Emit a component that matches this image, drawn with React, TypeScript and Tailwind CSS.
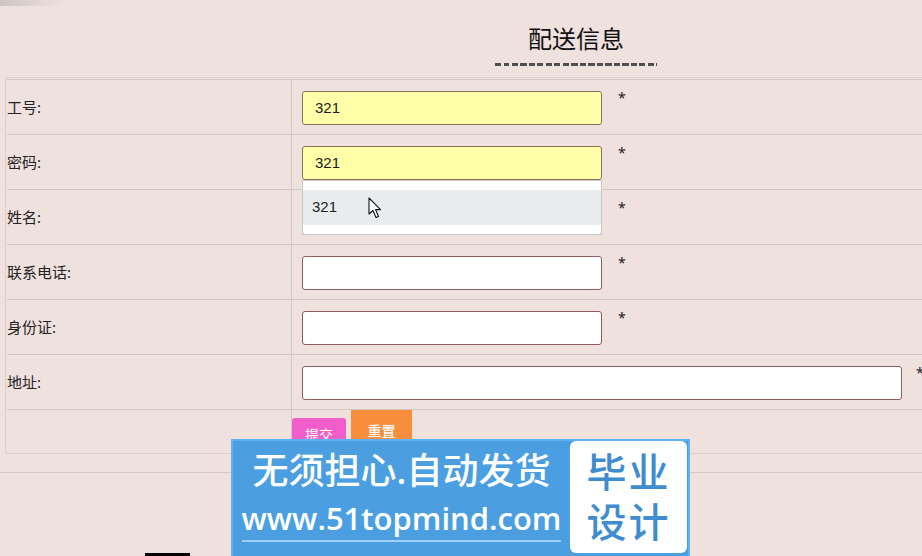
const rows = [
  { label: "工号:", value: "321", filled: true, wide: false },
  { label: "密码:", value: "321", filled: true, wide: false, suggest: true },
  { label: "姓名:", value: "", filled: false, wide: false },
  { label: "联系电话:", value: "", filled: false, wide: false },
  { label: "身份证:", value: "", filled: false, wide: false },
  { label: "地址:", value: "", filled: false, wide: true },
];

const cjk = "font-['Noto_Sans','Noto_Sans_CJK_SC',sans-serif]";

function Cursor() {
  return (
    <svg width="14" height="22" viewBox="0 0 14 22" className="absolute left-[65px] top-[7px]">
      <path d="M1 1 L1 17 L5 13.5 L8 20.5 L10.5 19.5 L7.6 12.6 L12.5 12.6 Z" fill="#fff" stroke="#111" strokeWidth="1.1" strokeLinejoin="round" />
    </svg>
  );
}

export default function App() {
  return (
    <div className={`relative w-[922px] h-[556px] overflow-hidden bg-[#efe1dd] text-[#1c1c1c] ${cjk}`}>
      <div className="w-[1152px]">
        <div className="h-[6px] w-[64px] bg-gradient-to-r from-[#cdc4c2] to-transparent" />

        {/* title */}
        <div className="h-[71px] flex flex-col items-center">
          <h2 className="mt-[17px] text-[24px] leading-[32px] font-normal text-[#111]">配送信息</h2>
          <div className="mt-[8px] h-[3px] w-[162px] bg-[repeating-linear-gradient(90deg,#4e4e4e_0_6px,transparent_6px_8.5px)]" />
        </div>

        {/* form table */}
        <div className="ml-[5px] w-[1141px] border border-[#dccfcb] p-[1px]">
          {rows.map((row, i) => (
            <div key={i} className="grid grid-cols-[284px_1fr] h-[55px] border-t border-[#d3c5c1]">
              <div className="flex items-center text-[15px] text-[#222]">{row.label}</div>
              <div className="relative flex items-start pl-[10px] pt-[10px] border-l border-[#d3c5c1]">
                <div
                  className={`h-[34px] mt-[1px] flex items-center pl-[12px] text-[15px] font-['Liberation_Sans',sans-serif] rounded-[3px] border ${
                    row.wide ? "w-[600px]" : "w-[300px]"
                  } ${row.filled ? "bg-[#ffffa9] border-[#8a6f55]" : "bg-white border-[#8e5c5c]"}`}
                >
                  {row.value}
                </div>
                <span className={`text-[14px] leading-[16px] ${row.wide ? "ml-[14px]" : "ml-[16px]"}`}>*</span>
                {row.suggest && (
                  <div className="absolute left-[10px] top-[45px] z-10 w-[300px] h-[55px] bg-white border border-[#c9c9c9] rounded-b-[3px] pt-[9px]">
                    <div className="relative h-[35px] bg-[#e8ecef] flex items-center pl-[9px] text-[15px] font-['Liberation_Sans',sans-serif] text-[#222]">
                      321
                      <Cursor />
                    </div>
                  </div>
                )}
              </div>
            </div>
          ))}
          <div className="grid grid-cols-[284px_1fr] h-[43px] border-t border-[#d3c5c1]">
            <div />
            <div className="flex items-end gap-[5px] pb-[1px] border-l border-[#d3c5c1]">
              <button className="h-[33px] w-[54px] bg-[#f25ec9] text-white text-[14px] rounded-t-[3px]">提交</button>
              <button className="h-[41px] w-[61px] bg-[#f78e3b] text-white text-[14px] font-medium">重置</button>
            </div>
          </div>
        </div>

        <div className="mt-[18px] h-px w-[1152px] bg-[#d6c8c4]" />
        <div className="mt-[80px] ml-[145px] h-[4px] w-[45px] bg-black" />
      </div>

      {/* watermark banner */}
      <div className="absolute left-[231px] top-[439px] w-[459px] h-[120px] bg-[#4b9fe0] border-2 border-[#5fb2f2] flex">
        <div className="flex-1 flex flex-col items-center pt-[5px]">
          <div className="text-[36px] leading-[50px] font-medium text-white">无须担心.自动发货</div>
          <div className="mt-[2px] text-[31px] leading-[40px] font-semibold text-white font-['Open_Sans',sans-serif] border-b-2 border-[#9fd0f4] pb-[2px]">
            www.51topmind.com
          </div>
        </div>
        <div className="w-[117px] h-[112px] mr-[1px] bg-white rounded-[6px] flex flex-col items-center justify-center text-[#3f8dd0] text-[40px] leading-[50px] font-medium tracking-[2px]">
          <span>毕业</span>
          <span>设计</span>
        </div>
      </div>
    </div>
  );
}
